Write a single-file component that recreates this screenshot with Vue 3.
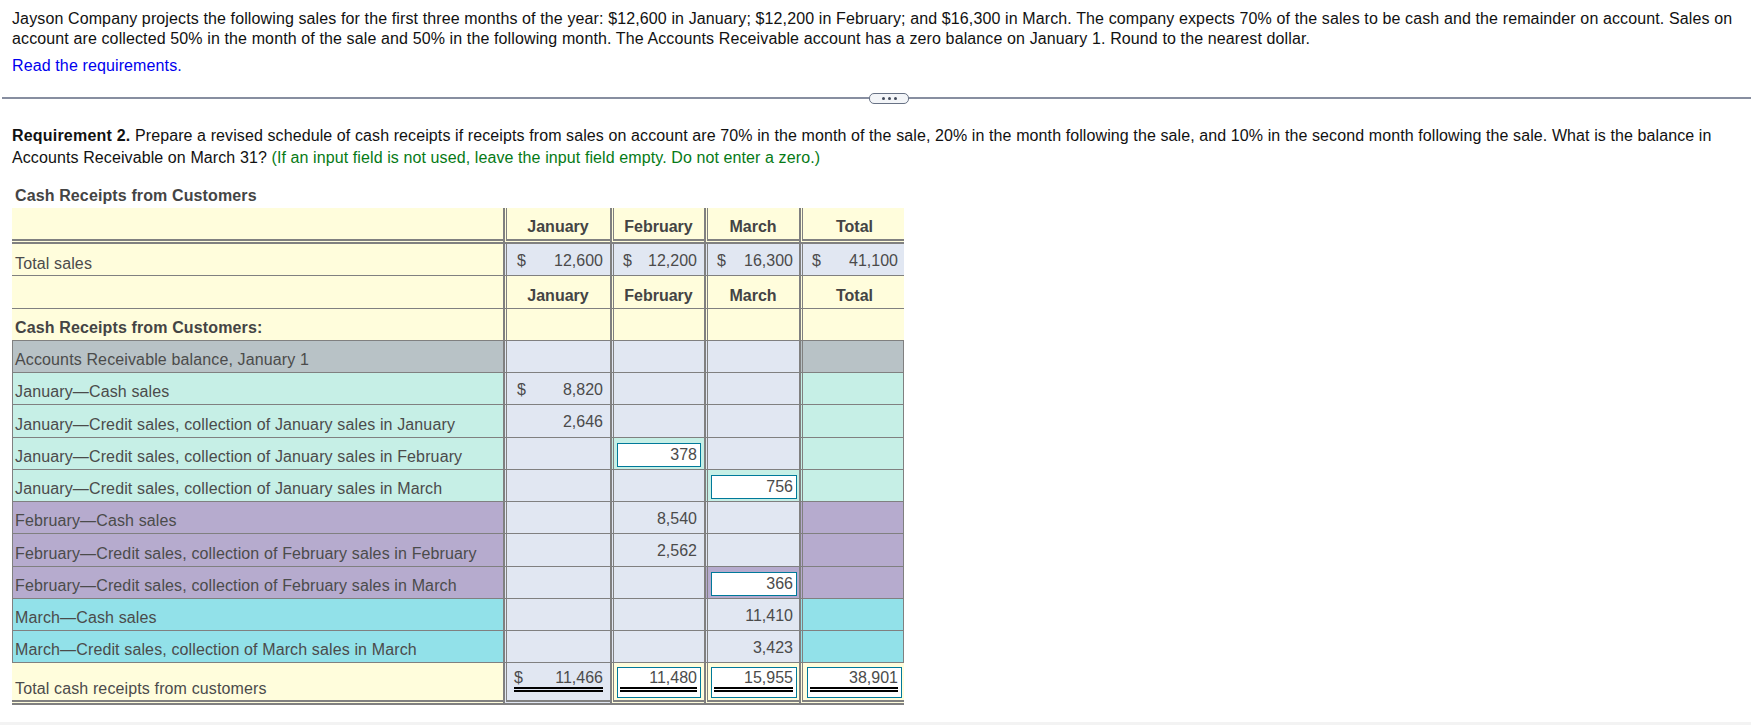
<script setup>
const months = ['January', 'February', 'March', 'Total']

const salesRow = [
  { sign: true, value: '12,600' },
  { sign: true, value: '12,200' },
  { sign: true, value: '16,300' },
  { sign: true, value: '41,100' }
]

const rows = [
  { label: 'Accounts Receivable balance, January 1', tone: 'grey', cells: [{}, {}, {}] },
  { label: 'January—Cash sales', tone: 'mint', cells: [{ sign: true, value: '8,820' }, {}, {}] },
  { label: 'January—Credit sales, collection of January sales in January', tone: 'mint', cells: [{ value: '2,646' }, {}, {}] },
  { label: 'January—Credit sales, collection of January sales in February', tone: 'mint', cells: [{}, { input: '378' }, {}] },
  { label: 'January—Credit sales, collection of January sales in March', tone: 'mint', cells: [{}, {}, { input: '756' }] },
  { label: 'February—Cash sales', tone: 'purple', cells: [{}, { value: '8,540' }, {}] },
  { label: 'February—Credit sales, collection of February sales in February', tone: 'purple', cells: [{}, { value: '2,562' }, {}] },
  { label: 'February—Credit sales, collection of February sales in March', tone: 'purple', cells: [{}, {}, { input: '366' }] },
  { label: 'March—Cash sales', tone: 'cyan', cells: [{}, {}, { value: '11,410' }] },
  { label: 'March—Credit sales, collection of March sales in March', tone: 'cyan', cells: [{}, {}, { value: '3,423' }] }
]
</script>

<template>
  <div class="page">
    <div class="intro">
      <p>Jayson Company projects the following sales for the first three months of the year: $12,600 in January; $12,200 in February; and $16,300 in March. The company expects 70% of the sales to be cash and the remainder on account. Sales on account are collected 50% in the month of the sale and 50% in the following month. The Accounts Receivable account has a zero balance on January 1. Round to the nearest dollar.</p>
      <a class="link" href="#">Read the requirements.</a>
    </div>

    <div class="divider">
      <span class="line first"></span>
      <span class="pill"><i></i><i></i><i></i></span>
      <span class="line"></span>
    </div>

    <p class="question">
      <b>Requirement 2.</b> Prepare a revised schedule of cash receipts if receipts from sales on account are 70% in the month of the sale, 20% in the month following the sale, and 10% in the second month following the sale. What is the balance in Accounts Receivable on March 31?
      <span class="hint">(If an input field is not used, leave the input field empty. Do not enter a zero.)</span>
    </p>

    <h3 class="title">Cash Receipts from Customers</h3>

    <table class="sheet">
      <colgroup>
        <col class="c-label" />
        <col class="c-jan" />
        <col class="c-feb" />
        <col class="c-mar" />
        <col class="c-tot" />
      </colgroup>
      <tbody>
        <tr class="head-top">
          <td class="yellow"></td>
          <th v-for="m in months" :key="m" class="yellow">{{ m }}</th>
        </tr>
        <tr>
          <td class="label sales yellow">Total sales</td>
          <td v-for="(c, i) in salesRow" :key="i" class="num blue">
            <div class="amount"><span>$</span><span>{{ c.value }}</span></div>
          </td>
        </tr>
        <tr class="head-mid">
          <td class="yellow"></td>
          <th v-for="m in months" :key="m" class="yellow">{{ m }}</th>
        </tr>
        <tr>
          <td class="label yellow"><b>Cash Receipts from Customers:</b></td>
          <td v-for="m in months" :key="m" class="yellow"></td>
        </tr>
        <tr v-for="r in rows" :key="r.label">
          <td class="label edge-l" :class="r.tone">{{ r.label }}</td>
          <td v-for="(c, i) in r.cells" :key="i" class="num" :class="c.input ? r.tone : 'blue'">
            <input v-if="c.input" class="entry" :value="c.input" readonly />
            <div v-else-if="c.value" class="amount">
              <span>{{ c.sign ? '$' : '' }}</span><span>{{ c.value }}</span>
            </div>
          </td>
          <td class="edge-r" :class="r.tone"></td>
        </tr>
        <tr class="total">
          <td class="label yellow">Total cash receipts from customers</td>
          <td class="num blue">
            <div class="amount ruled"><span>$</span><span>11,466</span></div>
          </td>
          <td class="num yellow"><div class="box"><div class="amount ruled"><span></span><span>11,480</span></div></div></td>
          <td class="num yellow"><div class="box"><div class="amount ruled"><span></span><span>15,955</span></div></div></td>
          <td class="num yellow"><div class="box"><div class="amount ruled"><span></span><span>38,901</span></div></div></td>
        </tr>
      </tbody>
    </table>

    <div class="band"></div>
  </div>
</template>

<style>
body {
  overflow: hidden;
}
</style>

<style scoped>
.page {
  height: 725px;
  display: flex;
  flex-direction: column;
  font-family: "Liberation Sans", Arial, sans-serif;
  font-size: 16px;
  line-height: 21px;
  color: #111;
  background: #fff;
}
p {
  margin: 0;
}
.intro {
  padding: 9px 11px 0 12px;
  letter-spacing: 0.12px;
}
.intro p {
  line-height: 20px;
}
.link {
  display: block;
  margin-top: 6px;
  color: #0000ee;
  text-decoration: none;
}
.divider {
  display: flex;
  align-items: center;
  margin: 16px 0 0 2px;
  height: 12px;
}
.line {
  flex: 1;
  height: 1.5px;
  background: #878ea0;
}
.line.first {
  flex: none;
  width: 867px;
}
.pill {
  width: 40px;
  height: 11px;
  box-sizing: border-box;
  display: flex;
  align-items: center;
  justify-content: center;
  gap: 3px;
  background: #f3f5f8;
  border: 1px solid #687285;
  border-radius: 5px;
}
.pill i {
  width: 3px;
  height: 3px;
  border-radius: 50%;
  background: #444c5c;
}
.question {
  margin-top: 21px;
  padding: 0 11px 0 12px;
  line-height: 22px;
  letter-spacing: 0.1px;
}
.question b {
  letter-spacing: 0.2px;
}
.hint {
  color: #067a16;
}
.title {
  margin: 16px 0 0 15px;
  font-size: 16px;
  line-height: 21px;
  letter-spacing: 0.12px;
  color: #444;
}
.sheet {
  margin: 2px 0 0 12px;
  width: 892px;
  table-layout: fixed;
  border-collapse: separate;
  border-spacing: 0;
  color: #4b4b4b;
}
.c-label { width: 492px; }
.c-jan { width: 107px; }
.c-feb { width: 94px; }
.c-mar { width: 95px; }
.c-tot { width: 104px; }
td,
th {
  box-sizing: border-box;
  height: 32.25px;
  padding: 0;
  border-bottom: 1px solid #808080;
  border-left: 3px double #808080;
  box-shadow: -1px 0 0 #808080;
}
td:first-child {
  border-left: 0;
  box-shadow: none;
}
th {
  padding: 6px 2px 0 0;
  font-weight: 700;
  text-align: center;
  color: #444;
}
th:last-child {
  padding: 6px 0 0 2px;
}
.head-mid th {
  padding-top: 8px;
}
.head-top td,
.head-top th {
  height: 36px;
  border-bottom: 5px double #808080;
}
.total td {
  height: 42px;
  border-bottom: 5px double #808080;
  vertical-align: top;
}
.label {
  padding: 0 3px;
  vertical-align: bottom;
  line-height: 24px;
  letter-spacing: 0.13px;
  white-space: nowrap;
}
.label.sales {
  line-height: 22px;
}
.label b {
  color: #444;
}
.total .label {
  vertical-align: bottom;
  line-height: 22px;
}
.edge-l {
  border-left: 1px solid #808080 !important;
  padding-left: 2px;
}
.edge-r {
  border-right: 1px solid #808080;
}
.yellow { background: #fffddc; }
.blue { background: #e1e7f2; }
.grey { background: #b8c2c6; }
.mint { background: #c6efe6; }
.purple { background: #b6abce; }
.cyan { background: #92e1e9; }
.num {
  padding-top: 2px;
  vertical-align: middle;
}
.total .num {
  padding-top: 0;
}
.amount {
  display: flex;
  justify-content: space-between;
  padding: 0 8px 0 9px;
}
td:nth-child(2) .amount {
  padding-left: 10px;
}
td:nth-child(4) .amount {
  padding-right: 7px;
}
td:nth-child(5) .amount {
  padding-right: 6px;
}
.entry {
  display: block;
  box-sizing: border-box;
  width: calc(100% - 7px);
  height: 24px;
  margin: 2px 0 0 3px;
  padding: 0 3px 0 0;
  border: 1px solid #00799a;
  border-radius: 0;
  outline: none;
  background: #fff;
  font: inherit;
  color: #4b4b4b;
  text-align: right;
}
td:nth-child(4) .entry {
  width: calc(100% - 6px);
}
.total td:nth-child(2) .amount.ruled {
  margin: 4px 8px 0 7px;
  padding: 0;
}
.ruled {
  height: 25px;
  box-sizing: border-box;
  border-bottom: 5px double #000;
  line-height: 21px;
}
.box {
  box-sizing: border-box;
  height: 31px;
  margin: 4px 4px 0 3px;
  padding: 0 3px 0 2px;
  background: #fff;
  border: 1px solid #00799a;
}
td:nth-child(4) .box {
  margin-right: 3px;
}
td:nth-child(5) .box {
  margin: 4px 2px 0 4px;
}
.total td .box .ruled {
  margin-top: -1px;
  padding: 0;
}
.band {
  margin-top: auto;
  height: 3px;
  background: #f3f3f3;
}
</style>
